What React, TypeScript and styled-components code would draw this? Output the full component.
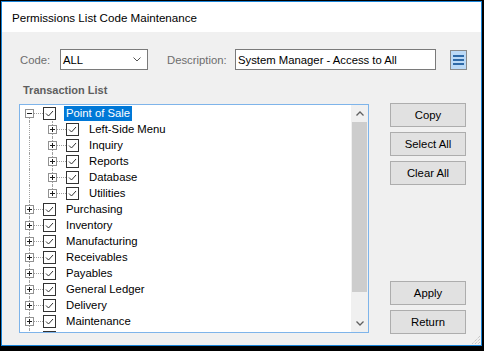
import React from 'react'
import styled, { createGlobalStyle, css } from 'styled-components'

const GlobalStyle = createGlobalStyle`
  html, body {
    margin: 0;
    padding: 0;
    background: #000;
  }
  body {
    font-family: "Liberation Sans", Arial, sans-serif;
    font-size: 11px;
  }
`

const LINE = '#a0a0a0'

const Window = styled.div`
  position: relative;
  box-sizing: border-box;
  width: 481px;
  height: 345px;
  margin: 1px 0 0 1px;
  border: 1px solid #1883d7;
  background: #f0f0f0;
  display: flex;
  flex-direction: column;
  overflow: hidden;
`

const TitleBar = styled.div`
  height: 30px;
  background: #fff;
  display: flex;
  align-items: center;
  padding-left: 10px;
  font-size: 11.6px;
  color: #000;
`

const Body = styled.div`
  padding: 17px 0 0 17px;
  display: flex;
  flex-direction: column;
`

const TopRow = styled.div`
  display: flex;
  align-items: center;
  height: 21px;
`

const FieldLabel = styled.span<{ $width: number; $offset?: number }>`
  width: ${p => p.$width}px;
  margin-left: ${p => p.$offset ?? 0}px;
  color: #6d6d6d;
  font-size: 11.3px;
`

const fieldBox = css`
  box-sizing: border-box;
  height: 21px;
  background: #fff;
  border: 1px solid #7a7a7a;
  display: flex;
  align-items: center;
  color: #000;
  font-size: 11.3px;
`

const Combo = styled.div`
  ${fieldBox};
  width: 88px;
  padding: 0 6px 0 2px;
  justify-content: space-between;
`

const TextField = styled.div`
  ${fieldBox};
  width: 201px;
  padding-left: 2px;
`

const MenuButton = styled.div`
  box-sizing: border-box;
  width: 17px;
  height: 20px;
  margin-left: 14px;
  border: 1px solid #8a8a8a;
  background: #bcdaf7;
  display: flex;
  align-items: center;
  justify-content: center;
`

const SectionTitle = styled.div`
  margin: 14px 0 0 4px;
  line-height: 13px;
  font-weight: bold;
  color: #5e5e5e;
  font-size: 11px;
`

const MainRow = styled.div`
  display: flex;
  align-items: flex-start;
  margin-top: 6px;
`

const TreeBox = styled.div`
  box-sizing: border-box;
  width: 350px;
  height: 229px;
  margin-top: 1px;
  border: 1px solid #7eb4ea;
  background: #fff;
  display: flex;
  overflow: hidden;
`

const TreeList = styled.div`
  flex: 1;
  overflow: hidden;
`

const ScrollBar = styled.div`
  width: 17px;
  background: #f0f0f0;
  display: flex;
  flex-direction: column;
`

const ScrollArrow = styled.div`
  height: 17px;
  display: flex;
  align-items: center;
  justify-content: center;
`

const ScrollThumb = styled.div`
  height: 170px;
  margin: 0 1px;
  background: #cdcdcd;
`

const ScrollTrack = styled.div`
  flex: 1;
`

const Row = styled.div`
  height: 16px;
  display: flex;
  align-items: center;
`

const Indent = styled.div<{ $line: boolean }>`
  position: relative;
  width: 23px;
  height: 16px;
  flex: none;
  ${p =>
    p.$line &&
    css`
      &::before {
        content: '';
        position: absolute;
        left: 9px;
        top: 0;
        bottom: 0;
        border-left: 1px dotted ${LINE};
      }
    `}
`

const Gutter = styled.div<{ $from: 'top' | 'mid'; $to: 'mid' | 'bottom' }>`
  position: relative;
  width: 23px;
  height: 16px;
  flex: none;
  &::before {
    content: '';
    position: absolute;
    left: 9px;
    top: ${p => (p.$from === 'top' ? 0 : 8)}px;
    bottom: ${p => (p.$to === 'bottom' ? 0 : 8)}px;
    border-left: 1px dotted ${LINE};
  }
  &::after {
    content: '';
    position: absolute;
    left: 10px;
    right: 0;
    top: 8px;
    border-top: 1px dotted ${LINE};
  }
`

const Expander = styled.svg`
  position: absolute;
  left: 5px;
  top: 4px;
  z-index: 1;
`

const Check = styled.svg`
  flex: none;
`

const NodeText = styled.span<{ $selected?: boolean }>`
  margin-left: 8px;
  padding: 0 2px;
  height: 15px;
  line-height: 15px;
  font-size: 11.3px;
  white-space: nowrap;
  color: ${p => (p.$selected ? '#fff' : '#000')};
  background: ${p => (p.$selected ? '#0078d7' : 'transparent')};
`

const ButtonColumn = styled.div`
  display: flex;
  flex-direction: column;
  gap: 5px;
  height: 231px;
  margin-left: 21px;
`

const Button = styled.div<{ $pushDown?: boolean }>`
  box-sizing: border-box;
  width: 76px;
  height: 24px;
  border: 1px solid #adadad;
  background: #e1e1e1;
  display: flex;
  align-items: center;
  justify-content: center;
  color: #000;
  font-size: 11.3px;
  ${p => p.$pushDown && 'margin-top: auto;'}
`

const Grip = styled.svg`
  position: absolute;
  right: 0;
  bottom: 0;
`

interface Node {
  label: string
  level: number
  expanded?: boolean
  selected?: boolean
}

// the last node is scrolled almost out of view: only its top edge shows
const nodes: Node[] = [
  { label: 'Point of Sale', level: 0, expanded: true, selected: true },
  { label: 'Left-Side Menu', level: 1 },
  { label: 'Inquiry', level: 1 },
  { label: 'Reports', level: 1 },
  { label: 'Database', level: 1 },
  { label: 'Utilities', level: 1 },
  { label: 'Purchasing', level: 0 },
  { label: 'Inventory', level: 0 },
  { label: 'Manufacturing', level: 0 },
  { label: 'Receivables', level: 0 },
  { label: 'Payables', level: 0 },
  { label: 'General Ledger', level: 0 },
  { label: 'Delivery', level: 0 },
  { label: 'Maintenance', level: 0 },
  { label: '', level: 0 },
]

const PlusMinus = ({ expanded }: { expanded?: boolean }) => (
  <Expander width="9" height="9" viewBox="0 0 9 9">
    <rect x="0.5" y="0.5" width="8" height="8" fill="#fff" stroke="#919191" />
    <line x1="2" y1="4.5" x2="7" y2="4.5" stroke="#1e1e1e" />
    {!expanded && <line x1="4.5" y1="2" x2="4.5" y2="7" stroke="#1e1e1e" />}
  </Expander>
)

const CheckMark = () => (
  <Check width="13" height="13" viewBox="0 0 13 13">
    <rect x="0.5" y="0.5" width="12" height="12" fill="#fff" stroke="#333" />
    <path d="M3 6.5 L5.5 9 L10 4" fill="none" stroke="#333" strokeWidth="1" />
  </Check>
)

const Chevron = ({ up }: { up?: boolean }) => (
  <svg width="8" height="5" viewBox="0 0 8 5">
    <path
      d={up ? 'M0.5 4.5 L4 1 L7.5 4.5' : 'M0.5 0.5 L4 4 L7.5 0.5'}
      fill="none"
      stroke="#606060"
      strokeWidth="1.3"
    />
  </svg>
)

const TreeRow = ({ node, index }: { node: Node; index: number }) => {
  const next = nodes[index + 1]
  const lastChild = node.level === 1 && (!next || next.level === 0)
  const from = node.level === 0 && index === 0 ? 'mid' : 'top'
  const to = lastChild ? 'mid' : 'bottom'
  return (
    <Row>
      {node.level > 0 && <Indent $line />}
      <Gutter $from={from} $to={to}>
        <PlusMinus expanded={node.expanded} />
      </Gutter>
      <CheckMark />
      {node.label && <NodeText $selected={node.selected}>{node.label}</NodeText>}
    </Row>
  )
}

export default function App() {
  return (
    <>
      <GlobalStyle />
      <Window>
        <TitleBar>Permissions List Code Maintenance</TitleBar>
        <Body>
          <TopRow>
            <FieldLabel $width={40} $offset={1}>Code:</FieldLabel>
            <Combo>
              ALL
              <svg width="8" height="5" viewBox="0 0 8 5">
                <path d="M0.5 0.5 L4 4 L7.5 0.5" fill="none" stroke="#555" />
              </svg>
            </Combo>
            <FieldLabel $width={68} $offset={19}>Description:</FieldLabel>
            <TextField>System Manager - Access to All</TextField>
            <MenuButton>
              <svg width="11" height="11" viewBox="0 0 11 11">
                <rect x="0" y="1" width="11" height="2" fill="#2f6aa8" />
                <rect x="0" y="5" width="11" height="2" fill="#2f6aa8" />
                <rect x="0" y="9" width="11" height="2" fill="#2f6aa8" />
              </svg>
            </MenuButton>
          </TopRow>
          <SectionTitle>Transaction List</SectionTitle>
          <MainRow>
            <TreeBox>
              <TreeList>
                {nodes.map((n, i) => (
                  <TreeRow key={i} node={n} index={i} />
                ))}
              </TreeList>
              <ScrollBar>
                <ScrollArrow>
                  <Chevron up />
                </ScrollArrow>
                <ScrollThumb />
                <ScrollTrack />
                <ScrollArrow>
                  <Chevron />
                </ScrollArrow>
              </ScrollBar>
            </TreeBox>
            <ButtonColumn>
              <Button>Copy</Button>
              <Button>Select All</Button>
              <Button>Clear All</Button>
              <Button $pushDown>Apply</Button>
              <Button>Return</Button>
            </ButtonColumn>
          </MainRow>
        </Body>
        <Grip width="12" height="12" viewBox="0 0 12 12">
          <path d="M11 3 L3 11 M11 6 L6 11 M11 9 L9 11" stroke="#b4b4b4" strokeWidth="1" strokeDasharray="1 1" />
        </Grip>
      </Window>
    </>
  )
}
